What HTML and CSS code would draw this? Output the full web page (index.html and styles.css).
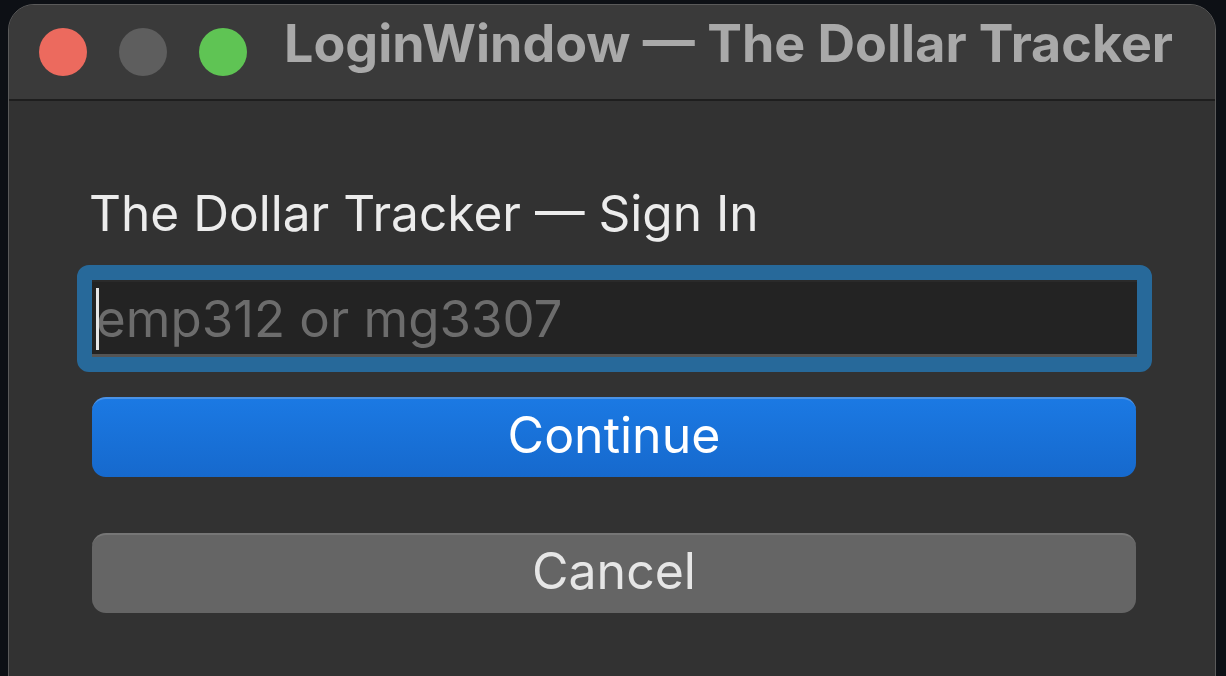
FILE: index.html
```html
<!DOCTYPE html>
<html>
<head>
<meta charset="utf-8">
<link rel="stylesheet" href="styles.css">
</head>
<body>
<div class="window">
  <div class="titlebar">
    <div class="lights">
      <span class="light red"></span>
      <span class="light gray"></span>
      <span class="light green"></span>
    </div>
    <div class="title">LoginWindow — The Dollar Tracker</div>
  </div>
  <div class="content">
    <div class="heading">The Dollar Tracker — Sign In</div>
    <div class="ring">
      <div class="field">
        <span class="caret"></span>
        <span class="placeholder">emp312 or mg3307</span>
      </div>
    </div>
    <div class="btn primary">Continue</div>
    <div class="btn secondary">Cancel</div>
  </div>
</div>
</body>
</html>
```

FILE: styles.css
```css
html, body {
  margin: 0;
  padding: 0;
  background: #0d1015;
  height: 676px;
  overflow: hidden;
  font-family: Inter, "Liberation Sans", sans-serif;
}

.window {
  margin: 4px 0 0 8px;
  width: 1208px;
  height: 700px;
  box-sizing: border-box;
  background: #323232;
  border: 1px solid #5a5a5a;
  border-radius: 26px;
  overflow: hidden;
}

.titlebar {
  height: 94px;
  background: #3a3a3a;
  border-bottom: 2px solid #1e1e1e;
  display: flex;
  align-items: center;
  padding-left: 30px;
  box-sizing: content-box;
}

.lights {
  display: flex;
  gap: 32px;
}

.light {
  width: 48px;
  height: 48px;
  border-radius: 50%;
  display: block;
}

.red { background: #ec6a5e; }
.gray { background: #5e5e5e; }
.green { background: #5fc454; }

.title {
  margin-left: 37px;
  font-size: 52px;
  font-weight: 700;
  color: #a9a9a9;
  margin-top: -17px;
  white-space: nowrap;
}

.content {
  padding: 0 78px 0 83px;
}

.heading {
  margin-top: 84px;
  margin-left: -3px;
  font-size: 49.6px;
  line-height: 56px;
  color: #ececec;
  white-space: nowrap;
}

.ring {
  margin-top: 24px;
  margin-left: -15px;
  margin-right: -15px;
  border: 15px solid #27699a;
  border-radius: 12px;
  background: #27699a;
}

.field {
  position: relative;
  height: 77px;
  box-sizing: border-box;
  background: #232323;
  border-top: 2px solid #2a2a2a;
  border-bottom: 3px solid #545454;
  display: flex;
  align-items: center;
  padding-left: 4px;
}

.caret {
  position: absolute;
  left: 4px;
  top: 6px;
  width: 3px;
  height: 62px;
  background: #e6e6e6;
}

.placeholder {
  font-size: 51px;
  color: #6c6c6c;
  white-space: nowrap;
}

.btn {
  height: 80px;
  box-sizing: border-box;
  border-radius: 14px;
  display: flex;
  align-items: center;
  justify-content: center;
  font-size: 50px;
  margin-right: 1px;
  padding-bottom: 6px;
}

.primary {
  margin-top: 25px;
  background: linear-gradient(#1b79e3, #1669cd);
  border-top: 2px solid #4a92e6;
  color: #ffffff;
}

.secondary {
  margin-top: 56px;
  background: #656565;
  border-top: 2px solid #767676;
  color: #e6e6e6;
}
```
